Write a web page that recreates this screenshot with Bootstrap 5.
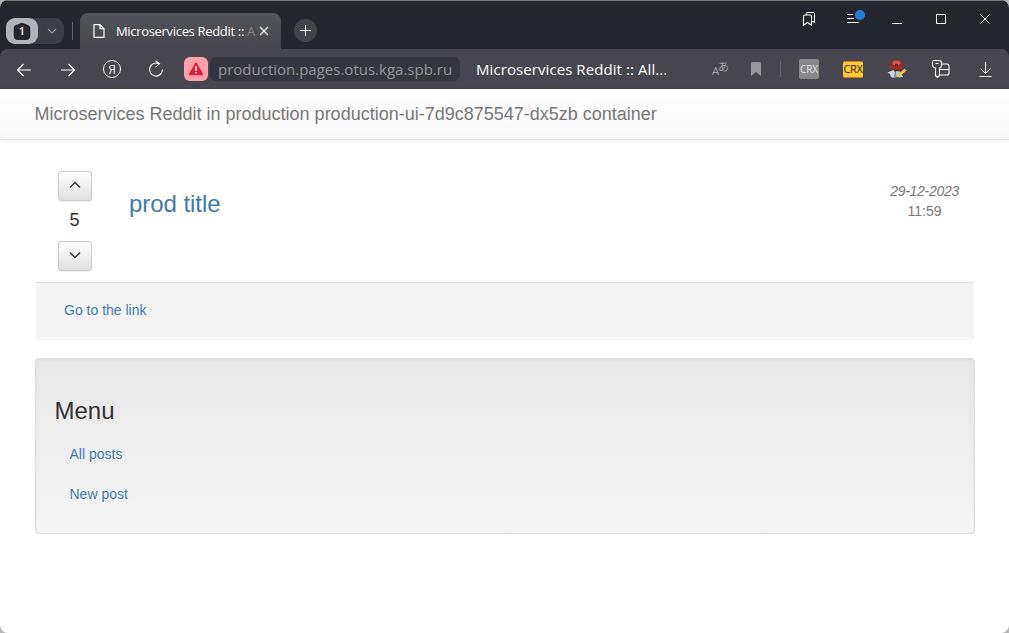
<!DOCTYPE html>
<html lang="en">
<head>
<meta charset="utf-8">
<title>Microservices Reddit :: All posts</title>
<link href="https://cdn.jsdelivr.net/npm/bootstrap@5.3.0/dist/css/bootstrap.min.css" rel="stylesheet">
<style>
body{font-family:"Liberation Sans",sans-serif;font-size:14px;line-height:20px;color:#333;background:#b5b5b5;overflow:hidden}
a{color:#3f7ab0;text-decoration:none}
svg{display:block;flex:none;fill:none;stroke:#fff;stroke-width:1.1}
.window{height:633px;border-radius:8px;overflow:hidden;background:#fff}
.chrome{font-family:"Open Sans","Noto Sans CJK JP",sans-serif;color:#fff}
.titlebar{height:49px;background:#23262f;border-top:1px solid #777b7c}
.spaces{width:58px;height:26px;margin:17px 0 0 6px;border-radius:9px;background:#3c3d46}
.spaces-now{width:32px;height:26px;border-radius:9px;background:#b2b3b8}
.split{width:1px;height:18px;background:#62646d}
.split-tab{margin:21px 7px 0 8px}
.tab{width:201px;height:36px;margin-top:12px;border-radius:8px 8px 0 0;background:linear-gradient(#53535c,#474650);padding-left:13px}
.tab-title{width:139px;margin-left:11px;font-size:13px;letter-spacing:-.32px}
.tab-title span{color:#85858c}
.newtab{width:23px;height:23px;margin:18px 0 0 13px;background:#42434c}
.cell{width:44px;flex:none}
.wincell{height:36px}
.toolbar{height:40px;background:#474650;padding:0 2px;box-shadow:0 -8px 0 #23262f;border-radius:8px 8px 0 0}
.warn{width:24px;height:24px;border-radius:6px;background:#ffa0aa;margin-left:6px}
.address{width:250px;height:24px;margin-left:2px;padding-left:8px;border-radius:6px;background:#34353f;color:#94959c;font-size:15px}
.page-title{margin-left:16px;font-size:15px;letter-spacing:.08px}
.crx{width:20px;height:20px;border-radius:2px;background:#888;color:#e4e4e4;font-size:10px}
.crx-on{background:#ffc932;color:#302500;font-size:11px;letter-spacing:-.3px;height:17px;border-bottom:1px solid #d47b22;border-top:1px solid #d47b22}
.site-nav{height:51px;background:linear-gradient(#fff,#f8f8f8);border-bottom:1px solid #e4e4e4;box-shadow:0 1px 5px rgba(0,0,0,.075);padding:0 34.500px;color:#777;font-size:18px}
.content-area{padding:31px 34px 0 35px}
.post{width:940px;height:168px;border-radius:4px;box-shadow:0 1px 1px rgba(0,0,0,.06)}
.post-body{height:111px;padding-left:23px}
.vote{width:34px;height:30px;padding:0 0 2px;border:1px solid #ccc;border-radius:3px;background:linear-gradient(#fff,#e0e0e0);box-shadow:0 1px 1px rgba(0,0,0,.075)}
.vote svg{stroke:#333;stroke-width:1.500}
.score{font-size:18px;height:40px;padding:0 1px 2px 0}
.post-title{font-size:24px;line-height:26px;margin:20px 0 0 37px;letter-spacing:-.05px}
.stamp{color:#777;margin:10px 16px 0 0}
.stamp em{letter-spacing:-.28px}
.post-link{height:56px;margin:0 1px;background:#f4f4f4;border-top:1px solid #ddd;padding:0 28px 2px}
.menu-box{width:940px;height:176px;margin-top:19px;border:1px solid #dcdcdc;border-radius:4px;background:linear-gradient(#e8e8e8,#f5f5f5);box-shadow:inset 0 1px 3px rgba(0,0,0,.05),0 1px 0 rgba(255,255,255,.1);padding:39px 18.500px 0}
.menu-title{font-size:24px;line-height:26px;margin:0 0 10px}
.menu-link{padding:10px 15px}
</style>
</head>
<body>
<div class="window">
<header class="chrome">
  <div class="titlebar d-flex align-items-start">
    <div class="spaces d-flex align-items-center">
      <div class="spaces-now d-flex align-items-center justify-content-center">
        <svg width="18" height="19" viewBox="0 0 18 19"><path d="M7.4 1.2Q9 .2 10.6 1.2L16 3.6Q17.3 4.4 17.3 6v7.5q0 4.5-4.5 4.5H5.2Q.7 18 .7 13.500V6Q.7 4.400 2 3.600z" fill="#23262f" stroke="none"/><text x="9" y="13" text-anchor="middle" font-size="11" font-weight="600" fill="#fff" stroke="none">1</text></svg>
      </div>
      <svg style="margin-left:9px" width="10" height="8" viewBox="0 0 10 8"><path d="M1 2l4 4 4-4" stroke="#9899a0"/></svg>
    </div>
    <div class="split split-tab"></div>
    <div class="tab d-flex align-items-center">
      <svg width="12" height="14" viewBox="0 0 12 14"><path d="M1 .7h6l4 4v8.600H1zM7 .7v4h4" stroke-width="1.200"/></svg>
      <div class="tab-title text-nowrap">Microservices Reddit :: <span>A</span></div>
      <svg style="margin-left:3px" width="12" height="10" viewBox="0 0 12 10"><path d="M2 1l8 8M10 1l-8 8"/></svg>
    </div>
    <div class="newtab rounded-circle d-flex align-items-center justify-content-center">
      <svg width="11" height="11"><path d="M5.500 0v11M0 5.500h11" stroke-width="1"/></svg>
    </div>
    <div class="d-flex ms-auto" style="margin-right:2px">
      <div class="cell wincell d-flex align-items-center justify-content-center"><svg width="14" height="16" viewBox="0 0 14 16"><path d="M1.500 5.500q0-1.500 1.500-1.500h5q1.500 0 1.500 1.500v8.700L5.500 11.500l-4 2.700zM4.500 4V2.500Q4.500 1.500 5.500 1.500h6q1 0 1 1v8.700l-3-1.200"/></svg></div>
      <div class="cell wincell d-flex align-items-center justify-content-center"><svg width="26" height="20" viewBox="0 0 26 20"><path d="M7 5.500h6M7 9.500h7M7 13.500h12" stroke-width="1"/><circle cx="20" cy="6" r="5" fill="#237bdb" stroke="none"/></svg></div>
      <div class="cell wincell d-flex align-items-center justify-content-center"><svg width="10" height="12"><path d="M0 10.500h10" stroke-width="1"/></svg></div>
      <div class="cell wincell d-flex align-items-center justify-content-center"><svg width="10" height="10"><path d="M.5.500h9v9h-9z" stroke-width="1"/></svg></div>
      <div class="cell wincell d-flex align-items-center justify-content-center"><svg width="10" height="10"><path d="M.5.500l9 9M9.500.500l-9 9" stroke-width="1"/></svg></div>
    </div>
  </div>
  <div class="toolbar d-flex align-items-center">
    <div class="cell d-flex justify-content-center"><svg width="16" height="15"><path d="M15 8H1.500M7.500 2l-6 6 6 6" stroke-width="1.100"/></svg></div>
    <div class="cell d-flex justify-content-center"><svg width="16" height="15"><path d="M1 8h13.500M8.500 2l6 6-6 6" stroke-width="1.100"/></svg></div>
    <div class="cell d-flex justify-content-center"><svg width="20" height="20"><circle cx="10" cy="10" r="8.500" stroke-width="1"/><text x="10" y="14.500" text-anchor="middle" font-family="Liberation Sans" font-size="13" textLength="7" lengthAdjust="spacingAndGlyphs" fill="#fff" stroke="none">Я</text></svg></div>
    <div class="cell d-flex justify-content-center"><svg width="16" height="18" viewBox="0 0 16 18"><path d="M11 3.800A6.500 6.500 0 1 0 14.500 9.500M7.500.8l4 3-4 3.400" stroke-width="1.100"/></svg></div>
    <div class="warn d-flex align-items-center justify-content-center"><svg width="16" height="14" viewBox="0 0 16 14"><path d="M8 1.500L14 12.300H2z" fill="#e01c3b" stroke="#e01c3b" stroke-width="2" stroke-linejoin="round"/><path d="M8 4.200v4.600M8 10v1.600" stroke-width="1.700"/></svg></div>
    <div class="address d-flex align-items-center"><span>production.pages.otus.kga.spb.ru</span></div>
    <div class="page-title text-nowrap">Microservices Reddit :: All...</div>
    <div class="d-flex align-items-center ms-auto">
      <svg width="17" height="20" overflow="visible"><g fill="#a3a3ab" stroke="none"><text x="0" y="16" font-size="11.500">A</text><text x="6" y="12" font-size="11" font-family="Noto Sans CJK JP">あ</text></g></svg>
      <svg style="margin-left:21px" width="12" height="14"><path d="M1 2Q1 0 3 0h6q2 0 2 2v12l-5-4-5 4z" fill="#96969e" stroke="none"/></svg>
      <div class="split" style="margin:0 6px 0 18px;height:16px"></div>
      <div class="cell d-flex justify-content-center"><div class="crx d-flex align-items-center justify-content-center">CRX</div></div>
      <div class="cell d-flex justify-content-center align-items-center"><div class="crx crx-on d-flex align-items-center justify-content-center">CRX</div></div>
      <div class="cell d-flex justify-content-center"><svg width="20" height="20" viewBox="0 0 20 20"><g stroke="none"><path d="M5 9.500h9l1 3-3 1-3-2-3 2z" fill="#52352f"/><path d="M.5 13.500l6-2.500 2 3-2 5-2.500-1-1-3z" fill="#c9d8e6"/><path d="M9 12l4 .5 3 5.500-4 .5-3-1z" fill="#b4c6dc"/><path d="M8 12l1.500 6.500L6.500 19z" fill="#7894b7"/><path d="M2.500 6Q3.500.5 9.500.5t6 6.500q0 3-2.500 3.500H5.500Q2 9.500 2.500 6z" fill="#a32b24"/><ellipse cx="9.500" cy="4" rx="4" ry="2.500" fill="#cf5a50"/><path d="M8 5h3v3H8z" fill="#74241f"/><path d="M10.500 15.500l6-5 2 2-6 5-3 .7z" fill="#f3c83b"/><path d="M16.500 10.500l1-1 2 2-1 1z" fill="#e9a7a0"/></g></svg></div>
      <div class="cell d-flex justify-content-center"><svg width="20" height="20" viewBox="0 0 20 20"><path d="M3 1.500h5q2.500 0 2.500 2.500v3Q10.500 8.500 8.500 9v7.500L6.500 18.500 4.500 16.500V9Q1.500 8.500 1.500 6V3.500Q1.500 1.500 3 1.500zM10.500 5H16q2 0 2 2v7q0 2-2 2H8.500M8.500 10.500H18M4.500 4.500h3"/></svg></div>
      <div class="cell d-flex justify-content-center"><svg width="14" height="18"><path d="M7.500 2v11.500M2.500 8.500l5 5 5-5M1.500 16.500h12" stroke-width="1"/></svg></div>
    </div>
  </div>
</header>
<nav class="site-nav d-flex align-items-center">Microservices Reddit in production production-ui-7d9c875547-dx5zb container</nav>
<main class="content-area">
  <section class="post">
    <div class="post-body d-flex align-items-start">
      <div class="text-center">
        <button class="vote d-flex align-items-center justify-content-center" aria-label="Up"><svg width="12" height="8"><path d="M1 6.500l5-5 5 5"/></svg></button>
        <div class="score d-flex align-items-center justify-content-center">5</div>
        <button class="vote d-flex align-items-center justify-content-center" aria-label="Down"><svg width="12" height="8"><path d="M1 1.500l5 5 5-5"/></svg></button>
      </div>
      <h3 class="post-title fw-normal"><a href="#">prod title</a></h3>
      <div class="stamp ms-auto text-center"><em>29-12-2023</em><br>11:59</div>
    </div>
    <div class="post-link d-flex align-items-center"><a href="#">Go to the link</a></div>
  </section>
  <aside class="menu-box">
    <h3 class="menu-title fw-normal">Menu</h3>
    <nav class="d-flex flex-column"><a class="menu-link" href="#">All posts</a><a class="menu-link" href="#">New post</a></nav>
  </aside>
</main>
</div>
<script src="https://cdn.jsdelivr.net/npm/bootstrap@5.3.0/dist/js/bootstrap.bundle.min.js"></script>
</body>
</html>
